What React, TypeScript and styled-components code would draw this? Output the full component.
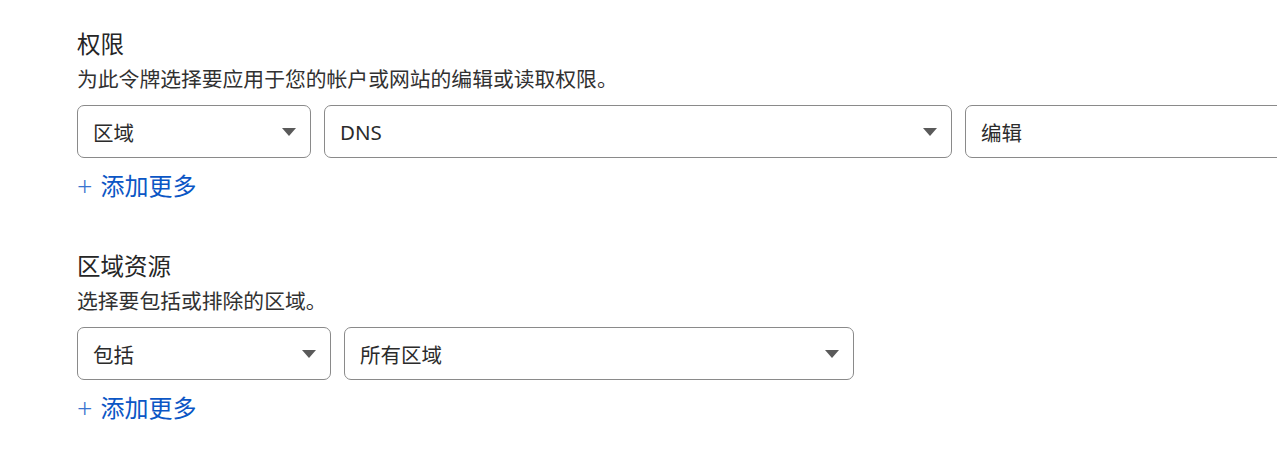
import React from "react";
import styled, { createGlobalStyle } from "styled-components";

const Global = createGlobalStyle`
  html, body { margin: 0; padding: 0; background: #ffffff; overflow: hidden; }
  body { font-family: "Noto Sans", "Noto Sans CJK SC", sans-serif; color: #313131; }
`;

const Page = styled.div`
  width: 1277px;
  height: 470px;
  overflow: hidden;
  padding: 28px 0 0 77px;
  box-sizing: border-box;
  display: flex;
  flex-direction: column;
  gap: 48px;
`;

const Section = styled.section`
  display: flex;
  flex-direction: column;
  align-items: flex-start;
`;

const Heading = styled.h3`
  margin: 0;
  font-size: 23.5px;
  line-height: 32px;
  font-weight: 400;
  color: #262626;
`;

const Description = styled.p`
  margin: 5px 0 0;
  font-size: 20.8px;
  line-height: 28px;
  color: #313131;
  white-space: nowrap;
`;

const Row = styled.div`
  display: flex;
  gap: 13px;
  margin-top: 12px;
  flex-wrap: nowrap;
`;

const Select = styled.div<{ $w: number }>`
  box-sizing: border-box;
  flex: 0 0 auto;
  width: ${(p) => p.$w}px;
  height: 53px;
  border: 1px solid #8a8a8a;
  border-radius: 7px;
  display: flex;
  align-items: center;
  justify-content: space-between;
  padding: 0 14px 0 15px;
  font-size: 20.5px;
  color: #2b2b2b;
  background: #fff;
`;

const Arrow = styled.span`
  width: 0;
  height: 0;
  border-left: 7px solid transparent;
  border-right: 7px solid transparent;
  border-top: 8px solid #5a5a5a;
`;

const AddMore = styled.a`
  margin-top: 12px;
  display: flex;
  align-items: center;
  gap: 8px;
  font-size: 24px;
  line-height: 32px;
  color: #0b56c5;
  text-decoration: none;
  cursor: pointer;
`;

const Plus = styled.span`
  font-size: 27px;
  font-weight: 300;
  line-height: 32px;
  color: #3a74cf;
`;

type Field = { label: string; w: number; arrow?: boolean };

const Block: React.FC<{ title: string; desc: string; fields: Field[] }> = ({ title, desc, fields }) => (
  <Section>
    <Heading>{title}</Heading>
    <Description>{desc}</Description>
    <Row>
      {fields.map((f, i) => (
        <Select key={i} $w={f.w}>
          <span>{f.label}</span>
          {f.arrow !== false && <Arrow />}
        </Select>
      ))}
    </Row>
    <AddMore>
      <Plus>+</Plus>
      <span>添加更多</span>
    </AddMore>
  </Section>
);

export default function App() {
  return (
    <>
      <Global />
      <Page>
        <Block
          title="权限"
          desc="为此令牌选择要应用于您的帐户或网站的编辑或读取权限。"
          fields={[
            { label: "区域", w: 234 },
            { label: "DNS", w: 628 },
            { label: "编辑", w: 360, arrow: false },
          ]}
        />
        <Block
          title="区域资源"
          desc="选择要包括或排除的区域。"
          fields={[
            { label: "包括", w: 254 },
            { label: "所有区域", w: 510 },
          ]}
        />
      </Page>
    </>
  );
}
